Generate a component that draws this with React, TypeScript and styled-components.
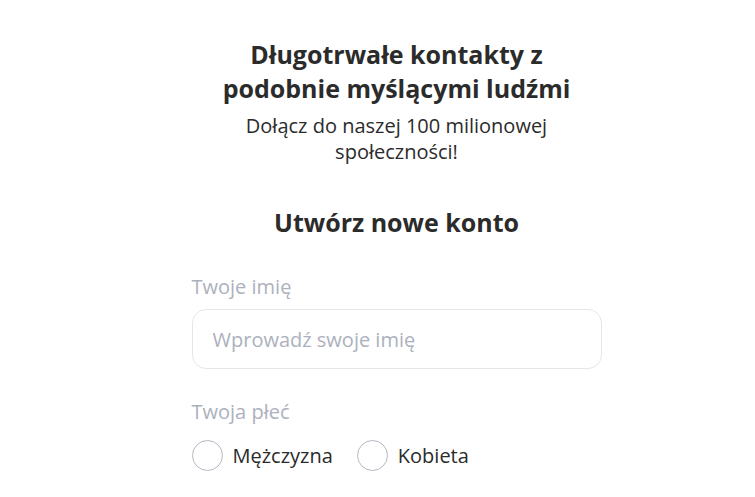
import React from 'react';
import styled, { createGlobalStyle } from 'styled-components';

const GlobalStyle = createGlobalStyle`
  body {
    margin: 0;
    background: #ffffff;
    font-family: 'Open Sans', 'Noto Sans', sans-serif;
    color: #2b2b2b;
  }
`;

const Page = styled.div`
  display: flex;
  justify-content: center;
  padding: 37px 0 0 38px;
`;

const Form = styled.div`
  width: 410px;
  display: flex;
  flex-direction: column;
`;

const Headline = styled.h1`
  margin: 0 auto;
  max-width: 360px;
  font-size: 25px;
  line-height: 34px;
  font-weight: 700;
  text-align: center;
  color: #2b2b2b;
`;

const Subline = styled.p`
  margin: 8px auto 0;
  max-width: 320px;
  font-size: 20px;
  line-height: 26px;
  text-align: center;
  color: #2b2b2b;
`;

const FormTitle = styled.h2`
  margin: 40px 0 0;
  font-size: 25px;
  line-height: 34px;
  font-weight: 700;
  text-align: center;
  color: #2b2b2b;
`;

const Label = styled.div<{ $top: number }>`
  font-size: 20px;
  line-height: 26px;
  color: #acb1bd;
  margin-top: ${(p) => p.$top}px;
`;

const TextInput = styled.input`
  box-sizing: border-box;
  margin-top: 9px;
  width: 100%;
  height: 60px;
  border: 1px solid #e5e6ea;
  border-radius: 14px;
  padding: 0 20px;
  font-family: inherit;
  font-size: 20px;
  color: #2b2b2b;
  outline: none;
  &::placeholder {
    color: #acb1bd;
  }
`;

const RadioRow = styled.div`
  display: flex;
  gap: 24px;
  margin-top: 15px;
`;

const RadioOption = styled.label`
  display: flex;
  align-items: center;
  gap: 10px;
  font-size: 20px;
  line-height: 31px;
  color: #2b2b2b;
  cursor: pointer;
`;

const Circle = styled.span`
  box-sizing: border-box;
  width: 31px;
  height: 31px;
  border-radius: 50%;
  border: 1px solid #b4b8c2;
  background: #fff;
`;

export default function App() {
  return (
    <>
      <GlobalStyle />
      <Page>
        <Form>
          <Headline>Długotrwałe kontakty z podobnie myślącymi ludźmi</Headline>
          <Subline>Dołącz do naszej 100 milionowej społeczności!</Subline>
          <FormTitle>Utwórz nowe konto</FormTitle>
          <Label $top={35}>Twoje imię</Label>
          <TextInput placeholder='Wprowadź swoje imię' />
          <Label $top={30}>Twoja płeć</Label>
          <RadioRow>
            <RadioOption>
              <Circle />
              Mężczyzna
            </RadioOption>
            <RadioOption>
              <Circle />
              Kobieta
            </RadioOption>
          </RadioRow>
        </Form>
      </Page>
    </>
  );
}
